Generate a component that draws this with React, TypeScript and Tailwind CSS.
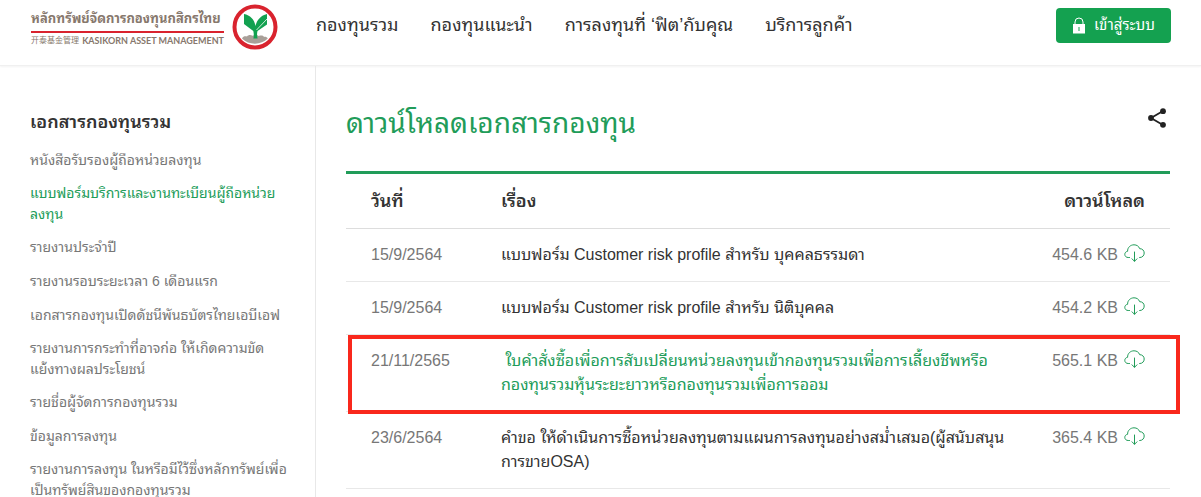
import type { ReactNode } from "react";

type Doc = {
  date: string;
  title: ReactNode;
  size: string;
  highlighted?: boolean;
};

const navLinks = ["กองทุนรวม", "กองทุนแนะนำ", "การลงทุนที่ ‘ฟิต’กับคุณ", "บริการลูกค้า"];

const sideLinks: { lines: string[]; active?: boolean }[] = [
  { lines: ["หนังสือรับรองผู้ถือหน่วยลงทุน"] },
  { lines: ["แบบฟอร์มบริการและงานทะเบียนผู้ถือหน่วย", "ลงทุน"], active: true },
  { lines: ["รายงานประจำปี"] },
  { lines: ["รายงานรอบระยะเวลา 6 เดือนแรก"] },
  { lines: ["เอกสารกองทุนเปิดดัชนีพันธบัตรไทยเอบีเอฟ"] },
  { lines: ["รายงานการกระทำที่อาจก่อ ให้เกิดความขัด", "แย้งทางผลประโยชน์"] },
  { lines: ["รายชื่อผู้จัดการกองทุนรวม"] },
  { lines: ["ข้อมูลการลงทุน"] },
  { lines: ["รายงานการลงทุน ในหรือมีไว้ซึ่งหลักทรัพย์เพื่อ", "เป็นทรัพย์สินของกองทุนรวม"] },
];

const docs: Doc[] = [
  { date: "15/9/2564", title: "แบบฟอร์ม Customer risk profile สำหรับ บุคคลธรรมดา", size: "454.6 KB" },
  { date: "15/9/2564", title: "แบบฟอร์ม Customer risk profile สำหรับ นิติบุคคล", size: "454.2 KB" },
  {
    date: "21/11/2565",
    title: (
      <>
        &nbsp;ใบคำสั่งซื้อเพื่อการสับเปลี่ยนหน่วยลงทุนเข้ากองทุนรวมเพื่อการเลี้ยงชีพหรือ
        <br />
        กองทุนรวมหุ้นระยะยาวหรือกองทุนรวมเพื่อการออม
      </>
    ),
    size: "565.1 KB",
    highlighted: true,
  },
  {
    date: "23/6/2564",
    title: (
      <>
        คำขอ ให้ดำเนินการซื้อหน่วยลงทุนตามแผนการลงทุนอย่างสม่ำเสมอ(ผู้สนับสนุน
        <br />
        การขายOSA)
      </>
    ),
    size: "365.4 KB",
  },
];

function LogoMark() {
  return (
    <svg viewBox="0 0 46 46" className="size-[46px] shrink-0" aria-hidden="true">
      <circle cx="23" cy="23" r="20.5" fill="#fff" stroke="#d9232e" strokeWidth="4" />
      <path
        d="M10 34.500c1-2.500 3.500-2.600 5-2 1-1.800 4-2 5.500-.7 2-1.300 5-1.200 6.300.2 2-.8 4.500-.5 5.200.9 1.500-.3 3.200.4 3.800 1.600-6.500 6.800-19 7-25.800 0z"
        fill="#a89f98"
      />
      <path
        d="M12 10c6 1 10.500 5.500 11.500 12 1.500-6.500 5.500-10.500 11.500-12v10.500l-9.500 6.500c-.6 2.500-.6 4.500.1 7.500h-4.200c.6-2.500.5-5-.1-7.500L12 20z"
        fill="#12a150"
      />
      <path d="M24.500 26 35 15" stroke="#fff" strokeWidth=".8" />
    </svg>
  );
}

function Logo() {
  return (
    <a href="#" className="flex items-center gap-2" aria-label="KASIKORN ASSET MANAGEMENT">
      <div className="w-[193px] whitespace-nowrap text-[#87786d]">
        <div className="border-b-2 border-[#d9232e] text-[13px] leading-6 font-bold">
          หลักทรัพย์จัดการกองทุนกสิกรไทย
        </div>
        <div className="flex items-center justify-between pt-0.5 leading-3">
          <span className="text-[8px]">开泰基金管理</span>
          <span className="font-[Lato,sans-serif] text-[9px] font-bold">KASIKORN ASSET MANAGEMENT</span>
        </div>
      </div>
      <LogoMark />
    </a>
  );
}

function LockIcon() {
  return (
    <svg viewBox="0 0 14 17" className="h-[17px] w-3.5" aria-hidden="true">
      <path d="M3 8V5a4 4 0 0 1 8 0v3" fill="none" stroke="#fff" strokeWidth="1" />
      <rect x="1" y="7" width="12" height="9.500" fill="#fff" />
      <path d="M7 10v4" stroke="#14a150" />
    </svg>
  );
}

function ShareIcon() {
  return (
    <svg viewBox="0 0 18 20" className="h-5 w-[18px]" aria-hidden="true">
      <path d="M15 3 3 10l12 7" fill="none" stroke="#222" strokeWidth="1.800" />
      <circle cx="15" cy="3.200" r="2.900" fill="#222" />
      <circle cx="3" cy="10" r="2.900" fill="#222" />
      <circle cx="15" cy="16.800" r="2.900" fill="#222" />
    </svg>
  );
}

function CloudDownloadIcon() {
  return (
    <svg
      viewBox="0 0 21 18"
      className="mb-1 h-[18px] w-[21px]"
      fill="none"
      stroke="#219c59"
      strokeLinecap="round"
      strokeLinejoin="round"
      aria-hidden="true"
    >
      <path d="M5.500 13.500H4.200C2.200 13.500.8 12.200.8 10.400c0-1.600 1.100-2.900 2.800-3.100C3.400 3.500 6.500.8 10 .8c2.800 0 4.900 1.500 5.700 3.900 2.600-.1 4.500 1.800 4.500 4.300 0 2.600-1.900 4.500-4.400 4.500h-.3" />
      <path d="M10.500 8v9.200M8 14.800l2.500 2.500 2.500-2.500" />
    </svg>
  );
}

function DocRow({ date, title, size, highlighted }: Doc) {
  return (
    <tr className="relative border-b border-[#e8e8e8] align-top leading-6">
      <td className="py-3.5 pl-[25px] text-[#777]">
        {date}
        {highlighted && (
          <span className="pointer-events-none absolute top-0 -right-2.5 -bottom-[3px] left-0.5 border-4 border-[#f9281c]" />
        )}
      </td>
      <td className={highlighted ? "py-3.5 text-[#219c59]" : "py-3.5 text-[#333]"}>{title}</td>
      <td className="py-3.5 pr-[25px]">
        <a href="#" className="flex items-center justify-end gap-1.5 whitespace-nowrap text-[#777]">
          {size}
          <CloudDownloadIcon />
        </a>
      </td>
    </tr>
  );
}

export default function App() {
  return (
    <div className="flex min-h-screen flex-col bg-white font-['Liberation_Sans','Noto_Sans_Thai_Looped','Loma','Noto_Sans_Thai','Noto_Sans_CJK_SC',sans-serif] text-base text-[#333]">
      <header className="flex h-[66px] shrink-0 items-start justify-between border-b border-[#f0f0f0] pr-[30px] pl-[31px] shadow-xs">
        <div className="flex items-start gap-[38px]">
          <div className="pt-1">
            <Logo />
          </div>
          <nav className="flex gap-8 pt-3 text-lg leading-[26px] whitespace-nowrap">
            {navLinks.map((label) => (
              <a key={label} href="#">
                {label}
              </a>
            ))}
          </nav>
        </div>
        <button
          type="button"
          className="mt-2 flex h-[35px] w-[115px] items-center justify-center gap-2 rounded-sm bg-[#14a150] text-[15px] whitespace-nowrap text-white"
        >
          <LockIcon />
          เข้าสู่ระบบ
        </button>
      </header>

      <div className="flex flex-1">
        <aside className="w-[316px] shrink-0 border-r border-[#e8e8e8] pt-11 pl-[30px]">
          <h2 className="text-lg leading-6 font-semibold">เอกสารกองทุนรวม</h2>
          <ul className="mt-[15px] flex flex-col gap-[11px] text-sm leading-[21px] whitespace-nowrap text-[#777]">
            {sideLinks.map(({ lines, active }) => (
              <li key={lines[0]} className="flex min-h-[23px] items-center">
                <a href="#" className={active ? "text-[#219c59]" : undefined}>
                  {lines.map((line) => (
                    <span key={line} className="block">
                      {line}
                    </span>
                  ))}
                </a>
              </li>
            ))}
          </ul>
        </aside>

        <main className="flex-1 pt-9 pr-[31px] pl-[30px]">
          <div className="flex items-start justify-between pr-1">
            <h1 className="text-[28px] leading-[44px] text-[#219c59]">ดาวน์โหลดเอกสารกองทุน</h1>
            <button type="button" aria-label="Share" className="mt-1.5">
              <ShareIcon />
            </button>
          </div>

          <table className="mt-[25px] w-full table-fixed border-collapse border-t-[3px] border-[#219c59] text-left">
            <thead>
              <tr className="border-b border-[#ddd] text-lg leading-[26px]">
                <th className="w-[155px] py-3.5 pl-[25px] font-semibold">วันที่</th>
                <th className="py-3.5 font-semibold">เรื่อง</th>
                <th className="w-[150px] py-3.5 pr-[25px] text-right font-semibold">ดาวน์โหลด</th>
              </tr>
            </thead>
            <tbody>
              {docs.map((doc, i) => (
                <DocRow key={i} {...doc} />
              ))}
            </tbody>
          </table>
        </main>
      </div>
    </div>
  );
}
